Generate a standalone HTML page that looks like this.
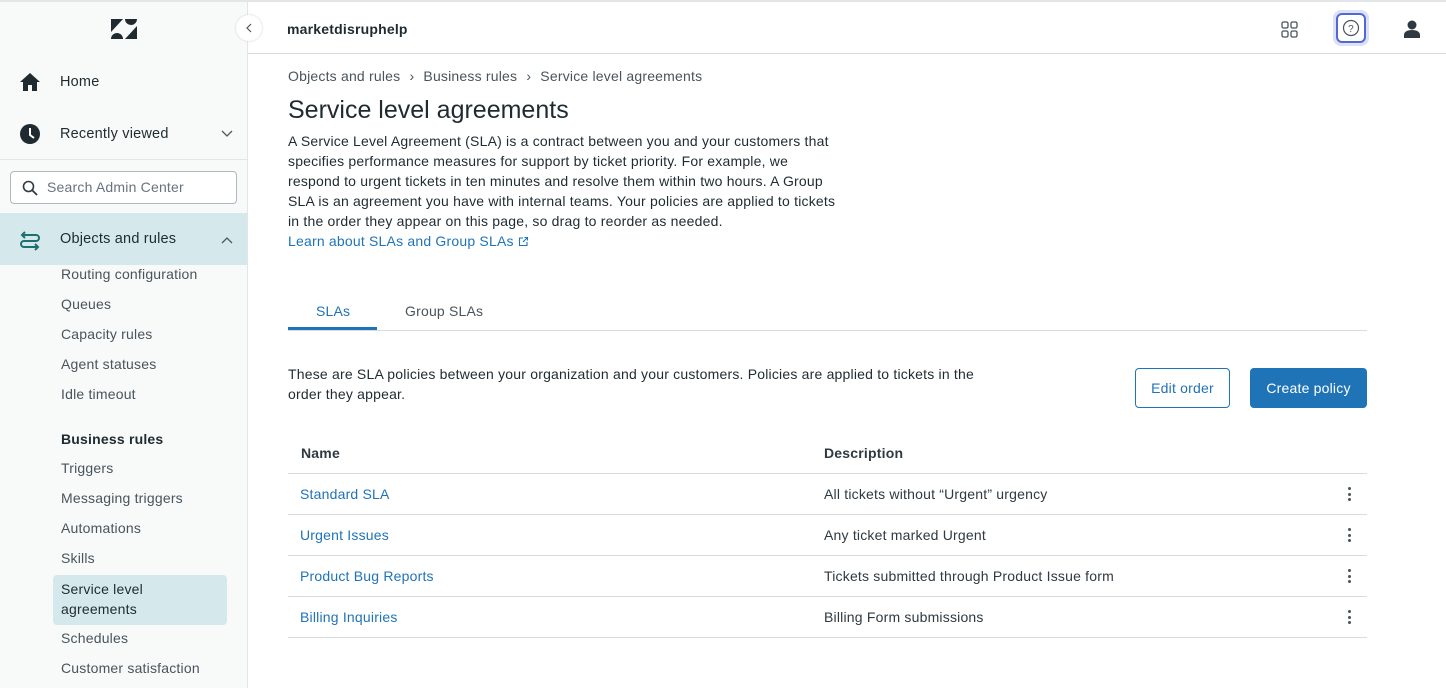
<!DOCTYPE html>
<html><head><meta charset="utf-8"><style>
*{box-sizing:border-box;margin:0;padding:0}
body{width:1446px;height:688px;overflow:hidden;font-family:"Liberation Sans",sans-serif;color:#2f3941;background:#fff;position:relative;font-size:14px;letter-spacing:0.2px}
.side{position:absolute;left:0;top:0;width:248px;height:688px;background:#f8f9f9;border-right:1px solid #e3e6e8;border-top:2px solid #e3e6e8}
.a{position:absolute;white-space:nowrap}
.sub{position:absolute;left:61px;color:#49545c;font-size:14px}
.top{position:absolute;left:248px;top:0;right:0;height:54px;border-top:2px solid #e3e6e8;border-bottom:1px solid #d8dcde}
.link{color:#1f73b7}
.row{position:absolute;left:288px;width:1079px;height:41px;border-bottom:1px solid #d8dcde}
.dots{position:absolute;right:16px;top:13px;width:3px}
.dots i{display:block;width:3px;height:3px;border-radius:50%;background:#49545c;margin-bottom:2.5px}
</style></head><body>
<div class="side">
 <svg class="a" style="left:111px;top:17px" width="26" height="20" viewBox="0 0 26 20"><path d="M0 0h12L0 13z M14 0a6 6 0 0 0 12 0z M26 7v13H14z M0 20a6 6 0 0 1 12 0z" fill="#1f2b30"/></svg>
 <div class="a" style="left:236px;top:13px;width:26px;height:26px;border-radius:50%;background:#fff;box-shadow:0 0 2px #ccc;z-index:5"></div>
 <svg class="a" style="left:245px;top:21px;z-index:6" width="8" height="10"><path d="M6 1L2 5l4 4" stroke="#555" stroke-width="1.2" fill="none"/></svg>
 <svg class="a" style="left:19px;top:70px" width="22" height="20" viewBox="0 0 22 20"><path d="M11 1L1 10h3v9h5v-6h4v6h5v-9h3z" fill="#1f2b30"/></svg>
 <div class="a" style="left:60px;top:72px;font-size:14.5px;color:#1f2b30">Home</div>
 <svg class="a" style="left:20px;top:122px" width="20" height="20"><circle cx="10" cy="10" r="10" fill="#1f2b30"/><path d="M10 4v7l4 3" stroke="#fff" stroke-width="2" fill="none"/></svg>
 <div class="a" style="left:60px;top:124px;font-size:14.5px;color:#1f2b30">Recently viewed</div>
 <svg class="a" style="left:221px;top:128px" width="12" height="8"><path d="M1 1l5 5 5-5" stroke="#555" stroke-width="1.3" fill="none"/></svg>
 <div class="a" style="left:0;top:157px;width:247px;height:1px;background:#e3e6e8"></div>
 <div class="a" style="left:10px;top:169px;width:227px;height:33px;border:1px solid #b0b8be;border-radius:4px;background:#fff"></div>
 <svg class="a" style="left:22px;top:178px" width="16" height="16"><circle cx="6.5" cy="6.5" r="5" stroke="#2f3941" stroke-width="1.6" fill="none"/><path d="M10 10l5 5" stroke="#2f3941" stroke-width="1.8"/></svg>
 <div class="a" style="left:47px;top:177px;font-size:14px;color:#68737d">Search Admin Center</div>
 <div class="a" style="left:0;top:211px;width:247px;height:52px;background:#d5e9ec"></div>
 <svg class="a" style="left:18px;top:225px" width="24" height="24" viewBox="0 0 24 24"><path d="M4 8h14a3 3 0 0 1 0 6H6a3 3 0 0 0 0 6h14M7 5L4 8l3 3M17 17l3 3-3 3" stroke="#1f6f6f" stroke-width="2" fill="none"/></svg>
 <div class="a" style="left:60px;top:229px;font-size:14.5px;color:#1f2b30">Objects and rules</div>
 <svg class="a" style="left:221px;top:234px" width="12" height="8"><path d="M1 7l5-5 5 5" stroke="#555" stroke-width="1.3" fill="none"/></svg>
 <div class="sub" style="top:264px">Routing configuration</div>
 <div class="sub" style="top:294px">Queues</div>
 <div class="sub" style="top:324px">Capacity rules</div>
 <div class="sub" style="top:354px">Agent statuses</div>
 <div class="sub" style="top:384px">Idle timeout</div>
 <div class="sub" style="top:429px;color:#1f2b30;font-weight:bold">Business rules</div>
 <div class="sub" style="top:458px">Triggers</div>
 <div class="sub" style="top:488px">Messaging triggers</div>
 <div class="sub" style="top:518px">Automations</div>
 <div class="sub" style="top:548px">Skills</div>
 <div class="a" style="left:53px;top:573px;width:174px;height:50px;background:#d5e9ec;border-radius:4px"></div>
 <div class="sub" style="top:577px;color:#1f2b30;line-height:20px">Service level<br>agreements</div>
 <div class="sub" style="top:628px">Schedules</div>
 <div class="sub" style="top:658px">Customer satisfaction</div>
</div>
<div class="top">
 <div class="a" style="left:39px;top:19px;font-weight:bold;font-size:14px;color:#1f2b30">marketdisruphelp</div>
 <svg class="a" style="left:1033px;top:19px" width="17" height="17"><g fill="none" stroke="#49545c" stroke-width="1.3"><rect x="1" y="1" width="6" height="6" rx="1.5"/><rect x="10" y="1" width="6" height="6" rx="1.5"/><rect x="1" y="10" width="6" height="6" rx="1.5"/><rect x="10" y="10" width="6" height="6" rx="1.5"/></g></svg>
 <div class="a" style="left:1085px;top:8px;width:36px;height:36px;border-radius:8px;background:#dde1f7"></div>
 <div class="a" style="left:1088px;top:11px;width:30px;height:30px;border-radius:6px;border:2px solid #5468d4;background:#fff"></div>
 <svg class="a" style="left:1094px;top:17px" width="18" height="18"><circle cx="9" cy="9" r="7.5" stroke="#49545c" stroke-width="1.2" fill="none"/><text x="9" y="13" font-size="10" text-anchor="middle" fill="#49545c" font-family="Liberation Sans">?</text></svg>
 <svg class="a" style="left:1156px;top:18px" width="16" height="18"><circle cx="8" cy="5" r="4.5" fill="#2f3941"/><path d="M0 18v-3c0-3 3-5 8-5s8 2 8 5v3z" fill="#2f3941"/></svg>
</div>
<div class="a" style="left:288px;top:68px;font-size:14px;color:#49545c">Objects and rules <span style="margin:0 5px">›</span> Business rules <span style="margin:0 5px">›</span> Service level agreements</div>
<div class="a" style="left:288px;top:96px;font-size:25px;color:#1f2b30;letter-spacing:0">Service level agreements</div>
<div class="a" style="left:288px;top:131px;line-height:20px;color:#1f2b30;white-space:normal;width:556px">A Service Level Agreement (SLA) is a contract between you and your customers that specifies performance measures for support by ticket priority. For example, we respond to urgent tickets in ten minutes and resolve them within two hours. A Group SLA is an agreement you have with internal teams. Your policies are applied to tickets in the order they appear on this page, so drag to reorder as needed.<br><span class="link">Learn about SLAs and Group SLAs <svg width="11" height="11" style="vertical-align:-1px"><path d="M5 2H1.5v7.5H9V6M6.5 1.5h3v3M9.5 1.5L5 6" stroke="#1f73b7" stroke-width="1.1" fill="none"/></svg></span></div>
<div class="a" style="left:288px;top:330px;width:1079px;height:1px;background:#d8dcde"></div>
<div class="a" style="left:288px;top:327px;width:89px;height:3px;background:#1f73b7"></div>
<div class="a" style="left:316px;top:303px;color:#1f73b7;font-size:14px">SLAs</div>
<div class="a" style="left:405px;top:303px;color:#49545c;font-size:14px">Group SLAs</div>
<div class="a" style="left:288px;top:364px;line-height:20px;color:#1f2b30">These are SLA policies between your organization and your customers. Policies are applied to tickets in the<br>order they appear.</div>
<div class="a" style="left:1135px;top:368px;width:95px;height:40px;border:1px solid #1f73b7;border-radius:4px;color:#1f73b7;text-align:center;line-height:38px;font-size:14px">Edit order</div>
<div class="a" style="left:1250px;top:368px;width:117px;height:40px;background:#1f73b7;border-radius:4px;color:#fff;text-align:center;line-height:40px;font-size:14px">Create policy</div>
<div class="row" style="top:433px"><div class="a" style="left:13px;top:12px;font-weight:bold">Name</div><div class="a" style="left:536px;top:12px;font-weight:bold">Description</div></div>
<div class="row" style="top:474px"><div class="a link" style="left:12px;top:12px">Standard SLA</div><div class="a" style="left:536px;top:12px">All tickets without “Urgent” urgency</div><div class="dots"><i></i><i></i><i></i></div></div>
<div class="row" style="top:515px"><div class="a link" style="left:12px;top:12px">Urgent Issues</div><div class="a" style="left:536px;top:12px">Any ticket marked Urgent</div><div class="dots"><i></i><i></i><i></i></div></div>
<div class="row" style="top:556px"><div class="a link" style="left:12px;top:12px">Product Bug Reports</div><div class="a" style="left:536px;top:12px">Tickets submitted through Product Issue form</div><div class="dots"><i></i><i></i><i></i></div></div>
<div class="row" style="top:597px"><div class="a link" style="left:12px;top:12px">Billing Inquiries</div><div class="a" style="left:536px;top:12px">Billing Form submissions</div><div class="dots"><i></i><i></i><i></i></div></div>
</body></html>
